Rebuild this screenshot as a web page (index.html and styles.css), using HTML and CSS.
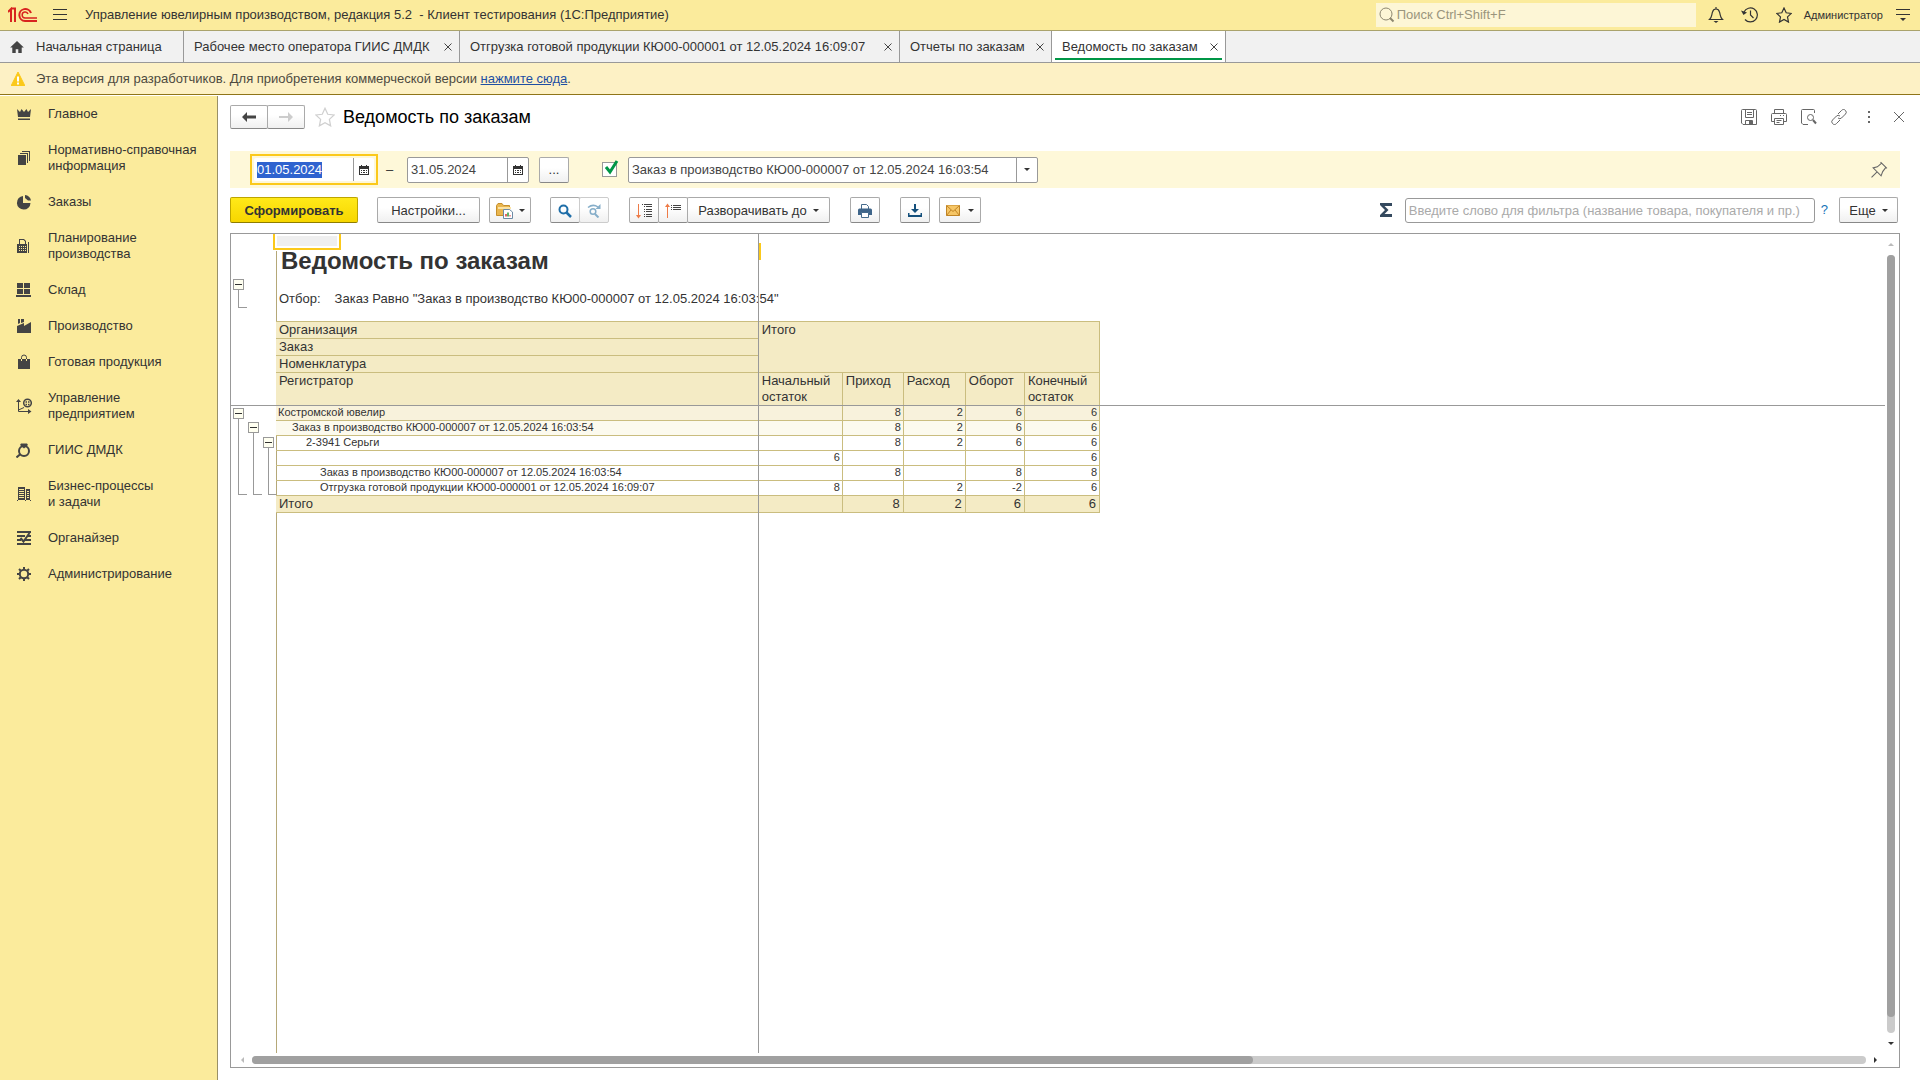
FILE: index.html
```html
<!DOCTYPE html>
<html lang="ru">
<head>
<meta charset="utf-8">
<title>Ведомость по заказам</title>
<link rel="stylesheet" href="styles.css">
</head>
<body>
<header class="topbar">
  <svg class="logo" width="30" height="16" viewBox="0 0 30 16" fill="none" stroke="#d8231f" stroke-width="2"><path d="M0 5 3 2V15M4 1.500H7V15M29 14H17a6 6 0 1 1 6-8"/><path d="M29 11H17a3 3 0 1 1 3-4" stroke-width="1.500"/></svg>
  <button class="plain" aria-label="Меню"><svg width="14" height="12" viewBox="0 0 14 12" stroke="#333"><path d="M0 .5H14M0 5.500H14M0 10.500H14"/></svg></button>
  <span class="app-title">Управление ювелирным производством, редакция 5.2 &nbsp;- Клиент тестирования (1С:Предприятие)</span>
  <label class="search">
    <svg width="16" height="16" viewBox="0 0 16 16" fill="none" stroke="#8d8770"><circle cx="7" cy="7" r="6"/><path d="m11 11 3.500 3.500" stroke-width="2"/></svg>
    <input type="text" placeholder="Поиск Ctrl+Shift+F" aria-label="Поиск">
  </label>
  <nav class="top-tools">
    <button class="plain" aria-label="Оповещения"><svg width="16" height="16" viewBox="0 0 16 16" fill="none" stroke="#333" stroke-width="1.200"><path d="M1.500 12.500H14.500C12 10.500 12.500 8 11.500 5 11 3 9.500 2 8 2S5 3 4.500 5C3.500 8 4 10.500 1.500 12.500ZM8 2V0"/><path d="M5.500 14H10.500L8 16Z" fill="#333" stroke="none"/></svg></button>
    <button class="plain" aria-label="История"><svg width="18" height="16" viewBox="0 0 18 16" fill="none" stroke="#333" stroke-width="1.200"><path d="M3 5A7 7 0 1 1 4 12.500M9.500 3.500V8L12.500 11"/><path d="M0 3.500 6 5.500 2.500 8Z" fill="#333" stroke="none"/></svg></button>
    <button class="plain" aria-label="Избранное"><svg width="16" height="16" viewBox="0 0 16 16" fill="none" stroke="#333" stroke-width="1.200"><path d="m8 1 2.200 4.800 5.100.6-3.800 3.500 1 5.200L8 12.500l-4.500 2.600 1-5.200L.7 6.400l5.100-.6Z"/></svg></button>
    <a class="user" href="#">Администратор</a>
    <button class="plain" aria-label="Настройки окна"><svg width="14" height="14" viewBox="0 0 14 14"><path d="M0 1.500H14M0 6.500H14" stroke="#333"/><path d="M4 10H10L7 13Z" fill="#333"/></svg></button>
  </nav>
</header>

<nav class="tabs">
  <a class="tab tab-home" href="#"><svg width="14" height="12" viewBox="0 0 16 14" fill="#444"><path d="M8 0 16 7.500H13.500V14H9.500V9.500H6.500V14H2.500V7.500H0Z"/></svg>Начальная страница</a>
  <div class="tab tab-workplace"><a href="#">Рабочее место оператора ГИИС ДМДК</a><button class="plain" aria-label="Закрыть"><svg class="x" viewBox="0 0 8 8"><path d="m.5.500 7 7m0-7-7 7"/></svg></button></div>
  <div class="tab tab-shipment"><a href="#">Отгрузка готовой продукции КЮ00-000001 от 12.05.2024 16:09:07</a><button class="plain" aria-label="Закрыть"><svg class="x" viewBox="0 0 8 8"><path d="m.5.500 7 7m0-7-7 7"/></svg></button></div>
  <div class="tab tab-reports"><a href="#">Отчеты по заказам</a><button class="plain" aria-label="Закрыть"><svg class="x" viewBox="0 0 8 8"><path d="m.5.500 7 7m0-7-7 7"/></svg></button></div>
  <div class="tab tab-active"><a href="#">Ведомость по заказам</a><button class="plain" aria-label="Закрыть"><svg class="x" viewBox="0 0 8 8"><path d="m.5.500 7 7m0-7-7 7"/></svg></button></div>
</nav>

<div class="notice">
  <svg width="14" height="14" viewBox="0 0 14 14"><path d="M7 0 14 14H0Z" fill="#fbc91b" stroke="#fbc91b" stroke-linejoin="round"/><path d="M6 4.500H8V9.500H6ZM6 10.500H8V12.500H6Z" fill="#fff"/></svg>
  <span>Эта версия для разработчиков. Для приобретения коммерческой версии <a href="#">нажмите сюда</a>.</span>
</div>

<div class="workspace">
  <nav class="sidebar">
    <a href="#"><svg class="ico" viewBox="0 0 16 16"><path d="M1 3 4 6 5.500 3 8 6 10.500 3 12 6 15 3 14 11H2ZM2 12.500H14V14H2Z"/></svg>Главное</a>
    <a href="#"><svg class="ico" viewBox="0 0 16 16"><path d="M2 5H10V15H2ZM4 3H12V13H11V4H4ZM6 1H14V11H13V2H6Z"/></svg>Нормативно-справочная информация</a>
    <a href="#"><svg class="ico" viewBox="0 0 16 16"><path d="M7 2V9H14.500A6.800 6.800 0 1 1 7 2ZM9 1A7 7 0 0 1 15 6.500H12L9 4Z"/></svg>Заказы</a>
    <a href="#"><svg class="ico" viewBox="0 0 16 16"><path fill-rule="evenodd" d="M3 1H8L10 3V6H11V15H1V6H3ZM4 2V6H9V3.500L7.500 2ZM3 8V9H4V8ZM5 8V9H6V8ZM7 8V9H8V8ZM9 8V9H10V8ZM3 10V11H4V10ZM5 10V11H6V10ZM7 10V11H8V10ZM9 10V11H10V10ZM3 12V13H4V12ZM5 12V13H6V12ZM7 12V13H8V12ZM9 12V13H10V12ZM12 4H13V15H12Z"/></svg>Планирование производства</a>
    <a href="#"><svg class="ico" viewBox="0 0 16 16"><path d="M1 1H7V6H1ZM8 1H14V6H8ZM1 7H7V12H1ZM8 7H14V12H8ZM0 13H15V15H0Z"/></svg>Склад</a>
    <a href="#"><svg class="ico" viewBox="0 0 16 16"><path d="M2 1H4V5L2 6ZM5 1H8V4L5 5ZM1 8 8 5V8L15 4V15H1Z"/></svg>Производство</a>
    <a href="#"><svg class="ico" viewBox="0 0 16 16"><path d="M2 5H14V15H2Z"/><path d="M5.500 5V3.500Q5.500 1 8 1T10.500 3.500V5" fill="none" stroke="#444"/><path d="M5.500 5V7M10.500 5V7" stroke="#fbeb9c"/></svg>Готовая продукция</a>
    <a href="#"><svg class="ico" viewBox="0 0 16 16"><path d="M2.500 3V13.500H13M2.500 12 8 9.500" fill="none" stroke="#444"/><path d="M0 4 2.500 1 5 4ZM12 11 15.500 13.500 12 16Z"/><circle cx="11.500" cy="5" r="3.800" fill="none" stroke="#444" stroke-width="1.500"/><path d="M9.500 4H11M12 4H13.500M9.500 6.500H11M12 6.500H13.500" stroke="#444" stroke-width="1.500"/></svg>Управление предприятием</a>
    <a href="#"><svg class="ico" viewBox="0 0 16 16"><circle cx="8" cy="9" r="5" fill="none" stroke="#444" stroke-width="2"/><path d="M5 1.500H11L12 3 8 6.500 4 3Z"/><path d="M4.500 12 .5 15.500" stroke="#444" stroke-width="2"/></svg>ГИИС ДМДК</a>
    <a href="#"><svg class="ico" viewBox="0 0 16 16"><path fill-rule="evenodd" d="M2 1H9V15H2ZM3 3V4H8V3ZM3 5V6H8V5ZM3 7V8H8V7ZM3 9V10H8V9ZM3 11V12H8V11ZM10 3H14V15H10ZM11 5V6H13V5ZM11 7V8H13V7ZM11 9V10H13V9ZM11 11V12H13V11ZM1 14H15V15H1Z"/></svg>Бизнес-процессы<br>и задачи</a>
    <a href="#"><svg class="ico ico-line" viewBox="0 0 16 16"><path d="M1 2H15M1 6H9M12 6H15M1 10H5M9 10H15M1 14H15"/><path d="m4.500 8 3 3.500L13.500 3"/></svg>Органайзер</a>
    <a href="#"><svg class="ico ico-line" viewBox="0 0 16 16"><circle cx="8" cy="8" r="4.200"/><path d="M8 1V3.500M8 12.500V15M1 8H3.500M12.500 8H15M3 3l1.800 1.800M11.200 11.200 13 13M3 13l1.800-1.800M11.200 4.800 13 3"/></svg>Администрирование</a>
  </nav>

  <main class="form">
    <div class="form-head">
      <div class="group">
        <button class="btn nav-btn" aria-label="Назад"><svg width="14" height="10" viewBox="0 0 14 10" fill="#444"><path d="M0 5 5 0V3.500H14V6.500H5V10Z"/></svg></button>
        <button class="btn nav-btn" aria-label="Вперед"><svg width="14" height="10" viewBox="0 0 14 10" fill="#ccc"><path d="M14 5 9 0V4H0V6H9V10Z"/></svg></button>
      </div>
      <button class="plain" aria-label="В избранное"><svg width="20" height="20" viewBox="0 0 16 16" fill="none" stroke="#d0d0d0"><path d="m8 1 2.200 4.800 5.100.6-3.800 3.500 1 5.200L8 12.500l-4.500 2.600 1-5.200L.7 6.400l5.100-.6Z"/></svg></button>
      <h1>Ведомость по заказам</h1>
      <div class="head-tools">
        <button class="plain" aria-label="Сохранить"><svg class="hi" viewBox="0 0 16 16"><path d="M.5 1.500Q.5.500 1.500.500H14.500Q15.500.500 15.500 1.500V15.500H2L.5 14ZM4.500.500V8.500H12.500V.500M6 3.500H11M6 5.500H11M4.500 15.500V11.500H11.500V15.500"/><path d="M8.500 12H11V15H8.500Z" fill="#666"/></svg></button>
        <button class="plain" aria-label="Печать"><svg class="hi" viewBox="0 0 16 16"><path d="M3.500 4V.500H12.500V4M3.500 12.500H.500V5.500Q.5 4.500 1.500 4.500H14.500Q15.500 4.500 15.500 5.500V12.500H12.500M3.500 9.500H12.500V15.500H3.500ZM5.500 11.500H10.500M5.500 13.500H8.500M9 6.500H10M12 6.500H13"/></svg></button>
        <button class="plain" aria-label="Просмотр"><svg class="hi" viewBox="0 0 16 16"><path d="M7 15.500H2L.5 14V1.500Q.5.500 1.500.500H12.500Q13.500.500 13.500 1.500V4"/><circle cx="9.500" cy="8.500" r="3"/><path d="m12 11 3 3.500" stroke-width="2"/></svg></button>
        <button class="plain" aria-label="Ссылка"><svg class="hi" viewBox="0 0 16 16"><path d="m7 5 3.500-3.500a2.500 2.500 0 0 1 4 0 2.500 2.500 0 0 1 0 3.500L10.500 9Q9 10.500 7 9M9 11l-3.500 3.500a2.500 2.500 0 0 1-4 0 2.500 2.500 0 0 1 0-3.500L5.500 7Q7 5.500 9 7"/></svg></button>
        <button class="plain" aria-label="Ещё"><svg class="hi" viewBox="0 0 16 16"><path d="M8 2V4M8 7V9M8 12V14" stroke-width="2"/></svg></button>
        <button class="plain" aria-label="Закрыть"><svg class="hi" viewBox="0 0 16 16"><path d="m3 3 10 10M13 3 3 13"/></svg></button>
      </div>
    </div>

    <div class="filter">
      <div class="focus-frame"><div class="field field-focus"><input id="from" class="date" type="text" value="01.05.2024" aria-label="Начало периода"><button class="field-btn" aria-label="Календарь"><svg class="cal" viewBox="0 0 10 10"><path fill-rule="evenodd" d="M0 1H2V0H3V1H7V0H8V1H10V10H0ZM1 4V9H9V4ZM2 5H3V6H2ZM4 5H6V6H4ZM7 5H8V6H7ZM2 7H3V8H2ZM4 7H6V8H4ZM7 7H8V8H7Z"/></svg></button></div></div>
      <span class="dash">–</span>
      <div class="field"><input class="date" type="text" value="31.05.2024" aria-label="Конец периода"><button class="field-btn" aria-label="Календарь"><svg class="cal" viewBox="0 0 10 10"><path fill-rule="evenodd" d="M0 1H2V0H3V1H7V0H8V1H10V10H0ZM1 4V9H9V4ZM2 5H3V6H2ZM4 5H6V6H4ZM7 5H8V6H7ZM2 7H3V8H2ZM4 7H6V8H4ZM7 7H8V8H7Z"/></svg></button></div>
      <button class="btn sq period">...</button>
      <label class="check"><input type="checkbox" checked aria-label="Использовать отбор по заказу"><svg width="16" height="16" viewBox="0 0 16 16"><path d="m3 8 4 5 7-11" fill="none" stroke="#009646" stroke-width="3"/></svg></label>
      <div class="field order"><select aria-label="Заказ"><option>Заказ в производство КЮ00-000007 от 12.05.2024 16:03:54</option></select><span class="field-btn"><i class="caret"></i></span></div>
      <button class="plain pin" aria-label="Закрепить"><svg width="17" height="17" viewBox="0 0 16 16" fill="none" stroke="#666"><path d="m9 1 6 6M10 2 6 5.500 2 6.500 9.500 14 11 10 14 6M5.500 10.500.500 15.500"/></svg></button>
    </div>

    <div class="toolbar">
      <button class="btn primary">Сформировать</button>
      <button class="btn settings">Настройки...</button>
      <button class="btn menu" aria-label="Варианты отчета"><svg width="18" height="16" viewBox="0 0 18 16"><path d="M.5 2.500 2 .5H6L7.500 2.500H13.500V12.500H.500Z" fill="#e9b64f" stroke="#c68f2c"/><path d="M2 5H15" stroke="#fbe3a4" stroke-width="2"/><path d="M7.500 6.500H13.500L16.500 9V15.500H7.500Z" fill="#fff" stroke="#6d8aa5"/><path d="M10 13.500V11" stroke="#d33" stroke-width="1.500"/><path d="M12 13.500V9.500" stroke="#2a9a3a" stroke-width="1.500"/><path d="M14 13.500V12" stroke="#d33"/></svg><i class="caret"></i></button>
      <div class="group">
        <button class="btn sq" aria-label="Найти"><svg width="14" height="14" viewBox="0 0 14 14" fill="none" stroke="#1f6ea8"><circle cx="5.500" cy="5.500" r="4" stroke-width="2"/><path d="m8.500 8.500 4.500 4.500" stroke-width="2.500"/></svg></button>
        <button class="btn sq off" aria-label="Найти далее"><svg width="14" height="14" viewBox="0 0 14 14" fill="none" stroke="#86aec9"><circle cx="6" cy="7.500" r="2.800" stroke-width="1.500"/><path d="m8 10 3.500 3.500" stroke-width="2"/><path d="M1 3.500Q6-.500 11 3" stroke-width="1.500"/><path d="M13.500 0V5H8.500Z" fill="#86aec9" stroke="none"/></svg></button>
      </div>
      <div class="group">
        <button class="btn sq" aria-label="Развернуть все"><svg width="16" height="16" viewBox="0 0 16 16"><path d="M2.500 1V13" stroke="#ee7b47"/><path d="M0 12H5L2.500 15.500Z" fill="#ee7b47"/><path d="M6 1.500H7M8 1.500H16M8 3.500H9M10 3.500H16M8 6.500H9M10 6.500H16M8 8.500H9M10 8.500H16M8 11.500H9M10 11.500H16M8 13.500H9M10 13.500H16" stroke="#444"/></svg></button>
        <button class="btn sq" aria-label="Свернуть все"><svg width="16" height="16" viewBox="0 0 16 16"><path d="M2.500 3V15" stroke="#ee7b47"/><path d="M0 4H5L2.500.500Z" fill="#ee7b47"/><path d="M6 2.500H7M8 2.500H16M6 4.500H7M8 4.500H16M6 6.500H7M8 6.500H16" stroke="#444"/></svg></button>
        <button class="btn expand">Разворачивать до<i class="caret"></i></button>
      </div>
      <button class="btn sq" aria-label="Печать"><svg width="14" height="14" viewBox="0 0 14 14"><path d="M3.500 5V.500H8.500L10.500 2.500V5" fill="#fff" stroke="#456a8c"/><path d="M0 6Q0 4.500 1.500 4.500H12.500Q14 4.500 14 6V11H0Z" fill="#3f658a"/><path d="M3.500 8.500H10.500V13.500H3.500Z" fill="#fff" stroke="#456a8c"/></svg></button>
      <button class="btn sq save" aria-label="Сохранить"><svg width="14" height="14" viewBox="0 0 14 14" fill="#15507c"><path d="M6 0H8V5H11L7 9 3 5H6ZM0 9H1.500V11H12.500V9H14V13H0Z"/></svg></button>
      <button class="btn menu mail" aria-label="Отправить"><svg width="14" height="11" viewBox="0 0 14 11" fill="#f6c666" stroke="#c08426"><path d="M.5.500H13.500V10.500H.500Z"/><path d="m.5.500 6.500 6 6.500-6M.500 10.500 5 5M13.500 10.500 9 5"/></svg><i class="caret"></i></button>
      <div class="toolbar-end">
        <svg width="12" height="14" viewBox="0 0 12 14" fill="#34495e"><path d="M0 0H12V3H4.500L8.500 7 4.500 11H12V14H0V12L5 7 0 2Z"/></svg>
        <input class="quick" type="text" placeholder="Введите слово для фильтра (название товара, покупателя и пр.)" aria-label="Фильтр">
        <a class="help" href="#">?</a>
        <button class="btn more">Еще<i class="caret"></i></button>
      </div>
    </div>

    <section class="sheet">
      <div class="sheet-view">
        <div class="outline">
          <div class="outline-head"><div class="branch"><button aria-label="Свернуть"></button></div></div>
          <div class="outline-body">
            <div class="branch"><button aria-label="Свернуть"></button></div>
            <div class="branch"><button aria-label="Свернуть"></button></div>
            <div class="branch"><button aria-label="Свернуть"></button></div>
          </div>
        </div>
        <div class="canvas">
          <span class="cell-cursor"></span>
          <h2>Ведомость по заказам</h2>
          <p class="selection-note"><span>Отбор:</span><span>Заказ Равно "Заказ в производство КЮ00-000007 от 12.05.2024 16:03:54"</span></p>
          <table>
            <colgroup><col class="c-name"><col class="c-open"><col class="c-in"><col class="c-out"><col class="c-turn"><col class="c-close"></colgroup>
            <thead>
              <tr><th>Организация</th><th colspan="5" rowspan="3">Итого</th></tr>
              <tr><th>Заказ</th></tr>
              <tr><th>Номенклатура</th></tr>
              <tr><th>Регистратор</th><th>Начальный остаток</th><th>Приход</th><th>Расход</th><th>Оборот</th><th>Конечный остаток</th></tr>
            </thead>
            <tbody>
              <tr class="lvl1"><td>Костромской ювелир</td><td></td><td>8</td><td>2</td><td>6</td><td>6</td></tr>
              <tr class="lvl2"><td>Заказ в производство КЮ00-000007 от 12.05.2024 16:03:54</td><td></td><td>8</td><td>2</td><td>6</td><td>6</td></tr>
              <tr class="lvl3"><td>2-3941 Серьги</td><td></td><td>8</td><td>2</td><td>6</td><td>6</td></tr>
              <tr class="lvl4"><td></td><td>6</td><td></td><td></td><td></td><td>6</td></tr>
              <tr class="lvl4"><td>Заказ в производство КЮ00-000007 от 12.05.2024 16:03:54</td><td></td><td>8</td><td></td><td>8</td><td>8</td></tr>
              <tr class="lvl4"><td>Отгрузка готовой продукции КЮ00-000001 от 12.05.2024 16:09:07</td><td>8</td><td></td><td>2</td><td>-2</td><td>6</td></tr>
            </tbody>
            <tfoot>
              <tr><td>Итого</td><td></td><td>8</td><td>2</td><td>6</td><td>6</td></tr>
            </tfoot>
          </table>
        </div>
        <span class="freeze-col"></span>
        <span class="freeze-row"></span>
      </div>
      <div class="vbar"><i class="arrow up"></i><div class="track"><div class="thumb"></div></div><i class="arrow down"></i></div>
      <div class="hbar"><i class="arrow left"></i><div class="track"><div class="thumb"></div></div><i class="arrow right"></i></div>
    </section>
  </main>
</div>
<script src="app.js"></script>
</body>
</html>
```
FILE: styles.css
```css
* { box-sizing: border-box; }
body {
  margin: 0;
  min-height: 100vh;
  display: flex;
  flex-direction: column;
  background: #fff;
  color: #333;
  font: 13px/16px "Liberation Sans", Arial, sans-serif;
}
button, input, select { font: inherit; color: inherit; }
a { color: inherit; text-decoration: none; }
svg { display: block; flex: none; }
.plain { border: 0; padding: 0; background: none; display: flex; }

/* window header */
.topbar {
  height: 31px;
  display: flex;
  align-items: center;
  padding: 0 10px 0 8px;
  background: #fbeb9c;
  border-bottom: 1px solid #aaa36c;
}
.logo { margin-right: 15px; }
.app-title { margin-left: 18px; }
.search {
  margin-left: auto;
  width: 320px;
  height: 24px;
  display: flex;
  align-items: center;
  gap: 2px;
  padding: 0 3px;
  background: #fdf6d6;
}
.search input { flex: 1; min-width: 0; border: 0; padding: 0; background: none; outline: 0; }
.search input::placeholder { color: #9a957d; }
.top-tools { display: flex; align-items: center; margin-left: 12px; gap: 17px; }
.user { font-size: 11px; margin: 0 -4px 0 -5px; }

/* window tabs */
.tabs { display: flex; height: 32px; background: #f1f1f1; border-bottom: 1px solid #999; }
.tab { display: flex; align-items: center; justify-content: space-between; gap: 8px; padding: 0 7px 0 10px; border-right: 1px solid #999; }
.tab-home { justify-content: flex-start; gap: 12px; min-width: 184px; }
.tab-workplace { min-width: 276px; }
.tab-shipment { min-width: 440px; }
.tab-reports { min-width: 152px; }
.x { width: 8px; height: 8px; stroke: #444; }
.tab-active { position: relative; min-width: 174px; background: #fff; }
.tab-active::after { content: ""; position: absolute; left: 3px; right: 3px; bottom: 2px; height: 2px; background: #009646; }

.notice {
  display: flex;
  align-items: center;
  gap: 11px;
  height: 32px;
  padding: 0 11px;
  background: #fdf1c5;
  border-bottom: 1px solid #8f7519;
  color: #4d4a40;
}
.notice a { color: #1e4fa3; text-decoration: underline; }

.workspace { flex: 1; display: flex; padding-top: 1px; }
.sidebar { width: 218px; flex: none; background: #fbeb9c; border-right: 1px solid #999066; }
.sidebar a { display: flex; align-items: center; gap: 16px; padding: 10px 12px 10px 16px; }
.ico { width: 16px; height: 16px; fill: #444; }
.ico-line { fill: none; stroke: #444; stroke-width: 2px; }

.form { flex: 1; min-width: 0; display: flex; flex-direction: column; padding: 9px 20px 12px 12px; }

.btn {
  display: flex;
  align-items: center;
  justify-content: center;
  height: 26px;
  padding: 1px 10px 0;
  border: 1px solid #aaa;
  border-bottom-color: #888;
  border-radius: 2px;
  background: linear-gradient(#fff 40%, #f0f0f0);
}
.group { display: flex; }
.group .btn + .btn { margin-left: -1px; }
.sq { width: 30px; padding: 1px 0 0; }
.off { border-color: #ccc; }
.caret { width: 0; border: 3px solid transparent; border-top-color: #333; border-bottom: 0; }

.form-head { display: flex; align-items: center; height: 24px; }
.nav-btn { height: 24px; width: 38px; padding: 0; }
.form-head .group { margin-right: 10px; }
h1 { margin: 0 0 0 8px; font-size: 18px; line-height: 22px; font-weight: 400; color: #000; }
.head-tools { display: flex; margin-left: auto; gap: 14px; margin-right: -7px; }
.hi { width: 16px; height: 16px; fill: none; stroke: #666; }

.filter {
  display: flex;
  align-items: center;
  height: 37px;
  margin-top: 22px;
  padding: 0 12px 0 20px;
  background: #fef8d9;
}
.focus-frame { border: 2px solid #fbc91b; padding: 2px; }
.field { display: flex; height: 26px; border: 1px solid #999; border-radius: 2px; background: #fff; color: #444; }
.field-focus { height: 23px; border: 0; }
.field input, .field select { border: 0; padding: 0 3px; background: none; outline: 0; appearance: none; min-width: 0; }
.field input { width: 99px; }
.field-btn { width: 21px; border: 0; border-left: 1px solid #999; padding: 0; background: none; display: flex; align-items: center; justify-content: center; }
.field input::selection { background: #2f63cf; color: #fff; }
.cal { width: 10px; height: 10px; fill: #333; }
.dash { width: 29px; padding-right: 6px; text-align: center; }
.period { margin-left: 10px; }
.check { position: relative; margin-left: 33px; display: flex; }
.check input { appearance: none; margin: 0; width: 15px; height: 15px; border: 1px solid #999; background: #fff; }
.check svg { position: absolute; left: 1px; top: -3px; pointer-events: none; }
.order { width: 410px; margin-left: 11px; }
.order select { flex: 1; }
.pin { margin-left: auto; }

.toolbar { display: flex; align-items: center; margin-top: 9px; height: 26px; }
.primary { width: 128px; margin-right: 19px; font-weight: 700; background: linear-gradient(#ffe919, #f7d600); border-color: #bda500; border-bottom-color: #8f7d00; }
.settings { width: 103px; margin-right: 9px; }
.menu { width: 42px; gap: 5px; padding: 1px 0 0; }
.toolbar .group { margin-right: 20px; }
.menu + .group { margin-left: 19px; }
.expand { width: 143px; gap: 6px; }
.save { margin: 0 9px 0 20px; }
.mail { gap: 8px; }
.toolbar-end { display: flex; align-items: center; margin-left: auto; margin-right: 2px; }
.quick { width: 410px; height: 25px; margin-left: 13px; padding: 0 3px; border: 1px solid #999; border-radius: 3px; }
.quick::placeholder { color: #aaa; }
.help { margin: 0 11px 0 6px; color: #1673b8; }
.more { width: 59px; gap: 6px; }

/* spreadsheet */
.sheet {
  flex: 1;
  margin-top: 10px;
  display: grid;
  grid-template: 1fr 14px / 1fr 14px;
  border: 1px solid #999;
}
.sheet-view { position: relative; display: flex; min-width: 0; overflow: hidden; }
.outline { width: 45px; flex: none; padding-left: 2px; }
.outline-head { display: flex; height: 171px; padding: 45px 0 97px; }
.outline-body { display: flex; height: 90px; gap: 4px; padding-top: 3px; }
.branch { display: flex; flex-direction: column; width: 11px; }
.branch + .branch { padding-top: 14px; }
.branch + .branch + .branch { padding-top: 29px; }
.branch button { flex: none; width: 11px; height: 11px; padding: 0; border: 1px solid #999; background: linear-gradient(#333, #333) center / 7px 1px no-repeat #fffff0; }
.branch::after { content: ""; flex: 1; width: 8px; margin-left: 5px; border: solid #999; border-width: 0 0 1px 1px; }

.canvas { position: relative; flex: 1; min-width: 0; }
.canvas::before { content: ""; position: absolute; left: 0; top: 17px; bottom: 0; width: 1px; background: #b5a878; }
.cell-cursor { position: absolute; left: -3px; top: 0; width: 68px; height: 16px; border: 2px solid #fbc91b; border-top: 0; background: #efefef; box-shadow: inset 0 0 0 2px #fff; }
h2 { margin: 0; padding: 13px 0 0 5px; font-size: 24px; line-height: 28px; }
.selection-note { margin: 0; display: flex; gap: 14px; padding: 16px 0 14px 3px; white-space: nowrap; }

table { position: relative; width: 824px; table-layout: fixed; border-collapse: collapse; }
.c-name { width: 482px; }
.c-open { width: 84px; }
.c-in { width: 61px; }
.c-out { width: 62px; }
.c-turn { width: 59px; }
.c-close { width: 75px; }
th, td { padding: 0 3px; height: 15px; border: 1px solid #cabd7f; vertical-align: top; text-align: left; font-weight: 400; }
th:first-child, td:first-child { border-left: 0; }
th { height: 17px; background: #f4ebc5; }
td + td { text-align: right; }
tbody td { padding: 0 2px; font-size: 11px; line-height: 12px; }
tfoot td { height: 17px; background: #f4ebc5; }
.lvl1 td { background: #f8f2dc; }
.lvl2 td { background: #fcfaee; }
.lvl2 td:first-child { padding-left: 16px; }
.lvl3 td:first-child { padding-left: 30px; }
.lvl4 td:first-child { padding-left: 44px; }

.freeze-col { position: absolute; left: 527px; top: 0; bottom: 0; width: 1px; background: #999; }
.freeze-col::after { content: ""; position: absolute; left: 1px; top: 9px; width: 2px; height: 17px; background: #fbc91b; }
.freeze-row { position: absolute; left: 0; right: 0; top: 171px; height: 1px; background: #999; }

.vbar { display: flex; flex-direction: column; align-items: center; padding: 9px 3px 8px 0; gap: 9px; }
.vbar .track { flex: 1; width: 8px; }
.vbar .thumb { height: 98%; }
.hbar { display: flex; align-items: center; padding: 0 8px 0 10px; gap: 8px; }
.hbar .track { flex: 1; height: 8px; }
.hbar .thumb { width: 62%; }
.track { border-radius: 4px; background: #cbcbcb; }
.thumb { height: 8px; border-radius: 4px; background: #a0a0a0; }
.arrow { width: 0; border: 3px solid transparent; }
.up { border-top: 0; border-bottom-color: #bbb; }
.down { border-bottom: 0; border-top-color: #333; }
.left { border-left: 0; border-right-color: #bbb; }
.right { border-right: 0; border-left-color: #333; }
```
FILE: app.js
```js
document.getElementById("from").select();
```
